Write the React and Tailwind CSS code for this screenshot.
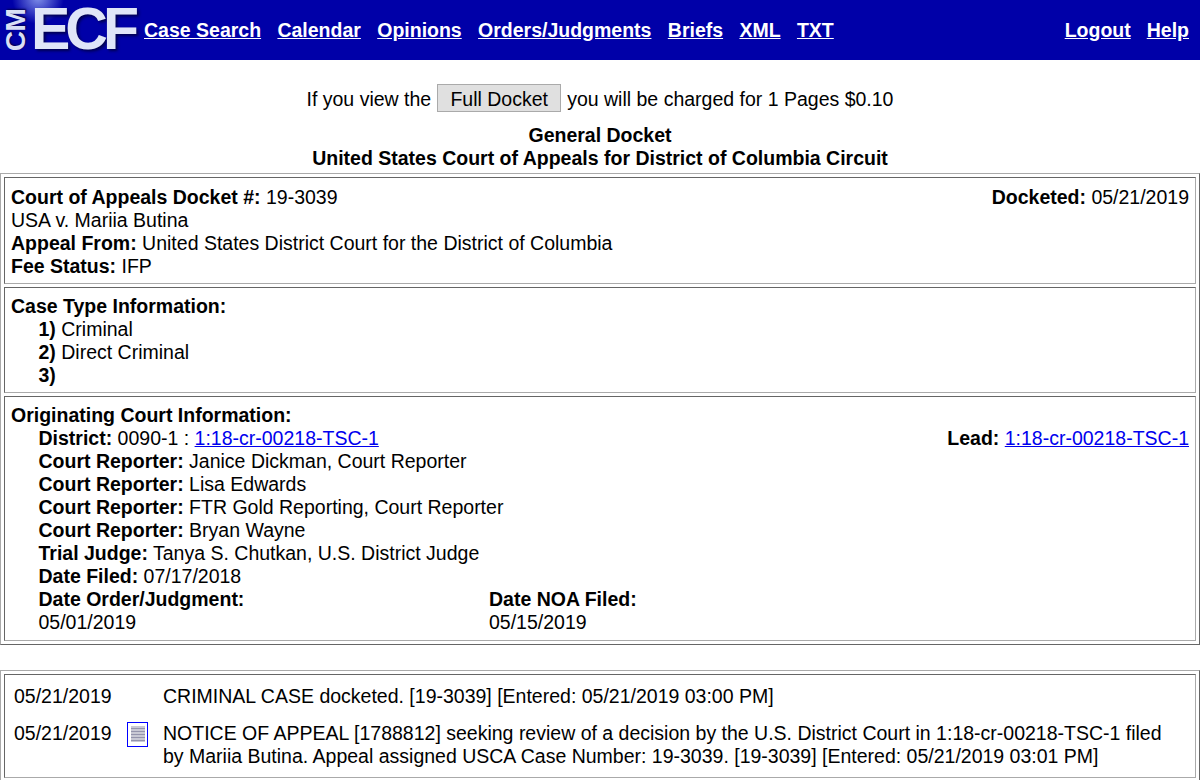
const navLinks = ["Case Search", "Calendar", "Opinions", "Orders/Judgments", "Briefs", "XML", "TXT"];

const reporters = [
  "Janice Dickman, Court Reporter",
  "Lisa Edwards",
  "FTR Gold Reporting, Court Reporter",
  "Bryan Wayne",
];

const Label = ({ children }) => <b className="font-bold">{children}</b>;

const Logo = () => (
  <div className="relative h-[60px] w-[140px] shrink-0 bg-[radial-gradient(circle_at_38px_-2px,#7f8fe8_0px,#0000a800_26px)]">
    <span className="absolute left-[-6px] top-[15px] h-[30px] w-[44px] -rotate-90 text-center text-[28px] leading-[30px] font-bold tracking-[-0.5px] text-[#d8def5] [text-shadow:1px_1px_2px_#000050]">CM</span>
    <span className="absolute left-[31px] top-0 text-[59px] leading-[58px] font-bold tracking-[-5px] text-[#dfe5f8] [text-shadow:2px_2px_3px_#000050]">ECF</span>
  </div>
);

const Nav = () => (
  <div className="flex h-[60px] items-start bg-[#0000a8] text-white">
    <Logo />
    <div className="flex flex-1 justify-between pt-[17px] pr-[10px] pl-[4px] text-[19.5px] leading-[26px] font-bold">
      <div className="flex gap-[16.35px]">
        {navLinks.map((link) => (
          <a key={link} href="#" className="underline">{link}</a>
        ))}
      </div>
      <div className="flex gap-[16px] pr-[1px]">
        <a href="#" className="underline">Logout</a>
        <a href="#" className="underline">Help</a>
      </div>
    </div>
  </div>
);

const Cell = ({ children, className = "" }) => (
  <div className={`border border-t-[#666] border-l-[#666] border-r-[#aaa] border-b-[#aaa] ${className}`}>
    {children}
  </div>
);

const Outer = ({ children, className = "" }) => (
  <div className={`flex flex-col gap-[3px] border border-t-[#aaa] border-l-[#aaa] border-r-[#666] border-b-[#666] p-[3px] ${className}`}>
    {children}
  </div>
);

const DocIcon = () => (
  <a href="#" className="block h-[25px] w-[21px] border border-[#0000ff] bg-white px-[2.5px] py-[3px]">
    <svg viewBox="0 0 14 16" className="block h-[16px] w-[14px]">
      <rect width="14" height="16" fill="#c8c8d4" />
      <path d="M0 2.5h14M0 5.5h14M0 8.5h14M0 11.5h14M0 14.5h14" stroke="#9494ac" strokeWidth="1" />
    </svg>
  </a>
);

export default function App() {
  return (
    <div className="h-[780px] overflow-hidden bg-white font-['Liberation_Sans',Arial,sans-serif] text-[19.5px] leading-[23px] text-black">
      <Nav />

      <div className="mt-[24px] flex h-[28px] items-center justify-center">
        <span className="pt-[2px]">If you view the</span>
        <button className="mx-[6px] h-[28px] w-[124px] border border-[#aaa] bg-[#e0e0e0] pt-[1px] text-[19.5px] leading-[24px]">Full Docket</button>
        <span className="pt-[2px]">you will be charged for 1 Pages $0.10</span>
      </div>

      <div className="mt-[12px] text-center font-bold">
        <div>General Docket</div>
        <div>United States Court of Appeals for District of Columbia Circuit</div>
      </div>

      <Outer className="mt-[3px]">
        <Cell className="flex h-[107px] justify-between px-[6px] pt-[8px]">
          <div>
            <div><Label>Court of Appeals Docket #:</Label> 19-3039</div>
            <div>USA v. Mariia Butina</div>
            <div><Label>Appeal From:</Label> United States District Court for the District of Columbia</div>
            <div><Label>Fee Status:</Label> IFP</div>
          </div>
          <div><Label>Docketed:</Label> 05/21/2019</div>
        </Cell>

        <Cell className="h-[106px] px-[6px] pt-[7px]">
          <div><Label>Case Type Information:</Label></div>
          <div className="pl-[27.5px]">
            <div><Label>1)</Label> Criminal</div>
            <div><Label>2)</Label> Direct Criminal</div>
            <div><Label>3)</Label></div>
          </div>
        </Cell>

        <Cell className="h-[245px] px-[6px] pt-[7px]">
          <div><Label>Originating Court Information:</Label></div>
          <div className="pl-[27.5px]">
            <div className="flex justify-between">
              <div>
                <Label>District:</Label> 0090-1 : <a href="#" className="text-[#0000ee] underline">1:18-cr-00218-TSC-1</a>
              </div>
              <div>
                <Label>Lead:</Label> <a href="#" className="text-[#0000ee] underline">1:18-cr-00218-TSC-1</a>
              </div>
            </div>
            {reporters.map((name) => (
              <div key={name}><Label>Court Reporter:</Label> {name}</div>
            ))}
            <div><Label>Trial Judge:</Label> Tanya S. Chutkan, U.S. District Judge</div>
            <div><Label>Date Filed:</Label> 07/17/2018</div>
            <div className="flex">
              <div className="w-[450.5px]">
                <div><Label>Date Order/Judgment:</Label></div>
                <div>05/01/2019</div>
              </div>
              <div>
                <div><Label>Date NOA Filed:</Label></div>
                <div>05/15/2019</div>
              </div>
            </div>
          </div>
        </Cell>
      </Outer>

      <Outer className="mt-[25px]">
        <Cell className="h-[104px] pt-[10px] pl-[9px]">
          <div className="flex">
            <div className="w-[149px]">05/21/2019</div>
            <div>CRIMINAL CASE docketed. [19-3039] [Entered: 05/21/2019 03:00 PM]</div>
          </div>
          <div className="mt-[14px] flex">
            <div className="w-[113px]">05/21/2019</div>
            <div className="w-[36px]"><DocIcon /></div>
            <div className="w-[1020px]">NOTICE OF APPEAL [1788812] seeking review of a decision by the U.S. District Court in 1:18-cr-00218-TSC-1 filed by Mariia Butina. Appeal assigned USCA Case Number: 19-3039. [19-3039] [Entered: 05/21/2019 03:01 PM]</div>
          </div>
        </Cell>
      </Outer>
    </div>
  );
}
